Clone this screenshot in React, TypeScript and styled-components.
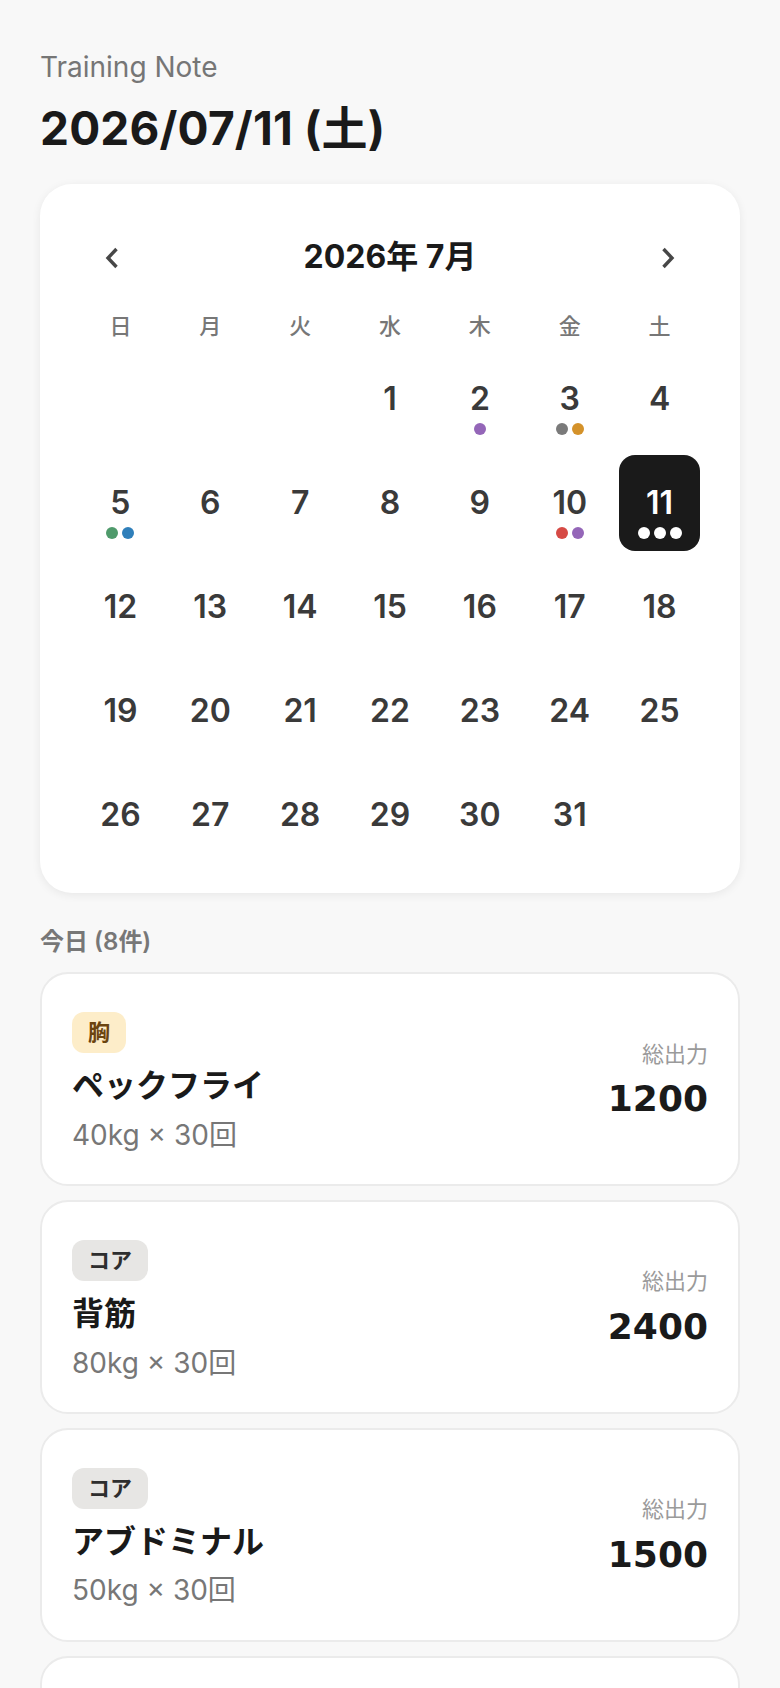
import React from "react";
import styled, { createGlobalStyle } from "styled-components";

type Category = "胸" | "コア" | "脚" | "背中" | "肩" | "腕";

type Workout = {
  id: number;
  category: Category;
  name: string;
  weight: number;
  reps: number;
};

const tagColors: Record<Category, { bg: string; fg: string }> = {
  胸: { bg: "#fdedc9", fg: "#6b4410" },
  コア: { bg: "#e7e6e4", fg: "#2e2e2e" },
  脚: { bg: "#dcefe2", fg: "#24573a" },
  背中: { bg: "#dbe9f5", fg: "#1f4f7a" },
  肩: { bg: "#ece1f5", fg: "#56307a" },
  腕: { bg: "#f8dedc", fg: "#7a2a26" },
};

// カレンダーの記録ドット
const dotsByDay: Record<number, string[]> = {
  2: ["#9466b8"],
  3: ["#7a7a7a", "#d4922a"],
  5: ["#4f9a6b", "#2f7fba"],
  10: ["#d64a45", "#9466b8"],
  11: ["#fff", "#fff", "#fff"],
};

const todayWorkouts: Workout[] = [
  { id: 1, category: "胸", name: "ペックフライ", weight: 40, reps: 30 },
  { id: 2, category: "コア", name: "背筋", weight: 80, reps: 30 },
  { id: 3, category: "コア", name: "アブドミナル", weight: 50, reps: 30 },
  { id: 4, category: "脚", name: "レッグプレス", weight: 100, reps: 20 },
  { id: 5, category: "背中", name: "ラットプルダウン", weight: 45, reps: 30 },
  { id: 6, category: "肩", name: "ショルダープレス", weight: 30, reps: 30 },
  { id: 7, category: "腕", name: "アームカール", weight: 15, reps: 30 },
  { id: 8, category: "胸", name: "チェストプレス", weight: 50, reps: 30 },
];

const weekLabels = ["日", "月", "火", "水", "木", "金", "土"];

const YEAR = 2026;
const MONTH = 7;
const SELECTED = 11;

const Chevron: React.FC<{ dir: "left" | "right" }> = ({ dir }) => (
  <svg width="16" height="22" viewBox="0 0 16 22">
    <polyline
      points={dir === "left" ? "12.5,2 4,11 12.5,20" : "3.5,2 12,11 3.5,20"}
      fill="none"
      stroke="#474747"
      strokeWidth="3.4"
      strokeLinejoin="miter"
    />
  </svg>
);

const App: React.FC = () => {
  const firstWeekday = new Date(YEAR, MONTH - 1, 1).getDay();
  const daysInMonth = new Date(YEAR, MONTH, 0).getDate();
  const cells: (number | null)[] = [
    ...Array.from({ length: firstWeekday }, () => null),
    ...Array.from({ length: daysInMonth }, (_, i) => i + 1),
  ];

  return (
    <>
      <GlobalStyle />
      <Page>
        <Eyebrow>Training Note</Eyebrow>
        <Title>2026/07/11 (土)</Title>

        <CalendarCard>
          <MonthHeader>
            <NavButton aria-label="前の月">
              <Chevron dir="left" />
            </NavButton>
            <MonthLabel>
              {YEAR}年 {MONTH}月
            </MonthLabel>
            <NavButton aria-label="次の月">
              <Chevron dir="right" />
            </NavButton>
          </MonthHeader>

          <WeekRow>
            {weekLabels.map((w) => (
              <WeekLabel key={w}>{w}</WeekLabel>
            ))}
          </WeekRow>

          <DayGrid>
            {cells.map((day, i) =>
              day === null ? (
                <DayCell key={`empty-${i}`} />
              ) : (
                <DayCell key={day} $selected={day === SELECTED}>
                  {day}
                  {dotsByDay[day] && (
                    <DotRow>
                      {dotsByDay[day].map((c, j) => (
                        <Dot key={j} $color={c} />
                      ))}
                    </DotRow>
                  )}
                </DayCell>
              )
            )}
          </DayGrid>
        </CalendarCard>

        <SectionLabel>今日 ({todayWorkouts.length}件)</SectionLabel>

        <WorkoutList>
          {todayWorkouts.map((item) => (
            <WorkoutCard key={item.id}>
              <WorkoutMain>
                <Tag $bg={tagColors[item.category].bg} $fg={tagColors[item.category].fg}>
                  {item.category}
                </Tag>
                <WorkoutName>{item.name}</WorkoutName>
                <WorkoutDetail>
                  {item.weight}kg × {item.reps}回
                </WorkoutDetail>
              </WorkoutMain>
              <TotalBox>
                <TotalLabel>総出力</TotalLabel>
                <TotalValue>{item.weight * item.reps}</TotalValue>
              </TotalBox>
            </WorkoutCard>
          ))}
        </WorkoutList>
      </Page>
    </>
  );
};

export default App;

const GlobalStyle = createGlobalStyle`
  * {
    box-sizing: border-box;
  }
  body {
    margin: 0;
    background: #f8f8f8;
    color: #1a1a1a;
    font-family: Inter, "Noto Sans CJK JP", sans-serif;
  }
`;

const Page = styled.div`
  padding: 51px 40px 40px;
`;

const Eyebrow = styled.p`
  margin: 0;
  font-size: 28px;
  line-height: 1.2;
  color: #767676;
`;

const Title = styled.h1`
  margin: 16px 0 0;
  font-size: 46px;
  font-weight: 700;
  line-height: 1.2;
  letter-spacing: 0.004em;
  color: #1a1a1a;
`;

const CalendarCard = styled.section`
  margin-top: 28px;
  background: #fff;
  border-radius: 32px;
  padding: 38px 40px 30px;
  box-shadow: 0 2px 10px rgba(0, 0, 0, 0.07);
`;

const MonthHeader = styled.div`
  display: flex;
  align-items: center;
  justify-content: space-between;
  height: 72px;
`;

const NavButton = styled.button`
  width: 64px;
  height: 72px;
  display: flex;
  align-items: center;
  justify-content: center;
  background: none;
  border: none;
  padding: 0;
  cursor: pointer;
`;

const MonthLabel = styled.div`
  margin-bottom: 8px;
  font-size: 32px;
  font-weight: 700;
  color: #1a1a1a;
`;

const WeekRow = styled.div`
  display: grid;
  grid-template-columns: repeat(7, 1fr);
  column-gap: 9px;
  margin-top: 17px;
`;

const WeekLabel = styled.div`
  text-align: center;
  font-size: 22px;
  font-weight: 500;
  line-height: 1.4;
  color: #777;
`;

const DayGrid = styled.div`
  display: grid;
  grid-template-columns: repeat(7, 1fr);
  column-gap: 9px;
  row-gap: 8px;
  margin-top: 9px;
`;

const DayCell = styled.div<{ $selected?: boolean }>`
  position: relative;
  height: 96px;
  display: flex;
  align-items: center;
  justify-content: center;
  border-radius: 16px;
  background: ${(p) => (p.$selected ? "#1a1a1a" : "transparent")};
  color: ${(p) => (p.$selected ? "#fff" : "#3a3a3a")};
  font-size: 32px;
  font-weight: 600;
`;

const DotRow = styled.div`
  position: absolute;
  left: 0;
  right: 0;
  bottom: 12px;
  display: flex;
  justify-content: center;
  gap: 4px;
`;

const Dot = styled.span<{ $color: string }>`
  width: 12px;
  height: 12px;
  border-radius: 50%;
  background: ${(p) => p.$color};
`;

const SectionLabel = styled.h2`
  margin: 32px 0 14px;
  font-size: 24px;
  font-weight: 600;
  line-height: 1.4;
  color: #777;
`;

const WorkoutList = styled.div`
  display: flex;
  flex-direction: column;
  gap: 14px;
`;

const WorkoutCard = styled.article`
  display: flex;
  align-items: center;
  justify-content: space-between;
  background: #fff;
  border: 2px solid #ebebeb;
  border-radius: 28px;
  padding: 38px 30px 29px;
`;

const WorkoutMain = styled.div`
  display: flex;
  flex-direction: column;
  align-items: flex-start;
`;

const Tag = styled.span<{ $bg: string; $fg: string }>`
  padding: 5px 16px;
  border-radius: 12px;
  background: ${(p) => p.$bg};
  color: ${(p) => p.$fg};
  font-size: 22px;
  font-weight: 700;
  line-height: 1.4;
`;

const WorkoutName = styled.div`
  margin-top: 11px;
  font-size: 32px;
  font-weight: 700;
  line-height: 1.4;
  color: #1a1a1a;
`;

const WorkoutDetail = styled.div`
  margin-top: 7px;
  font-size: 28px;
  line-height: 1.4;
  color: #777;
`;

const TotalBox = styled.div`
  margin-bottom: 8px;
  text-align: right;
`;

const TotalLabel = styled.div`
  font-size: 22px;
  line-height: 1.4;
  color: #9a9a9a;
`;

const TotalValue = styled.div`
  margin-top: 8px;
  font-family: "DejaVu Sans", Inter, sans-serif;
  font-size: 36px;
  font-weight: 700;
  line-height: 1.2;
  color: #1a1a1a;
`;
